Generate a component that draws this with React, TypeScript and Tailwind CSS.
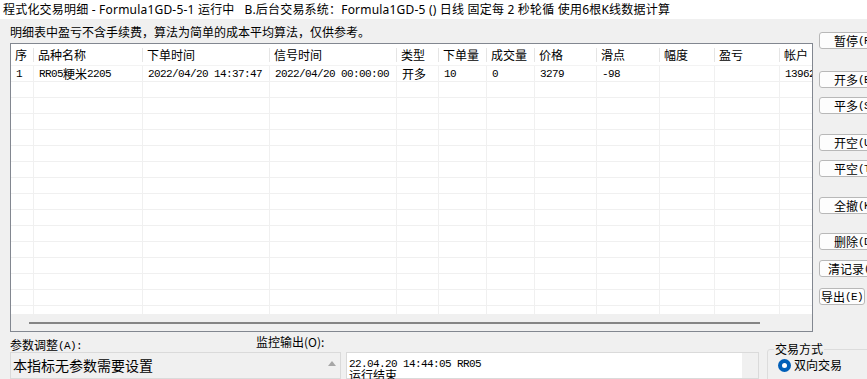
import React from "react";

// ASCII runs are drawn in a mono face so they keep the 6px SimSun pitch
function Mix({ text }: { text: string }) {
  const parts = text.split(/([\x20-\x7e]+)/).filter(Boolean);
  return (
    <span className="inline-flex items-center">
      {parts.map((p, i) =>
        /^[\x20-\x7e]+$/.test(p) ? (
          <span
            key={i}
            className="font-['Liberation_Mono',monospace] text-[11px] tracking-[-0.6px] whitespace-pre translate-y-px"
          >
            {p}
          </span>
        ) : (
          <span key={i}>{p}</span>
        )
      )}
    </span>
  );
}

const columns = [
  { title: "序", w: "w-[23px]" },
  { title: "品种名称", w: "w-[109px]" },
  { title: "下单时间", w: "w-[127px]" },
  { title: "信号时间", w: "w-[127px]" },
  { title: "类型", w: "w-[42px]" },
  { title: "下单量", w: "w-[48px]" },
  { title: "成交量", w: "w-[48px]" },
  { title: "价格", w: "w-[62px]" },
  { title: "滑点", w: "w-[63px]" },
  { title: "幅度", w: "w-[55px]" },
  { title: "盈亏", w: "w-[65px]" },
  { title: "帐户", w: "w-[100px]" },
];

const firstRow = [
  "1",
  "RR05粳米2205",
  "2022/04/20 14:37:47",
  "2022/04/20 00:00:00",
  "开多",
  "10",
  "0",
  "3279",
  "-98",
  "",
  "",
  "13962800",
];

const buttons = [
  { label: "暂停(P)", mt: "mt-0", w: "w-[72px]" },
  { label: "开多(B)", mt: "mt-[22px]", w: "w-[72px]" },
  { label: "平多(S)", mt: "mt-[9px]", w: "w-[72px]" },
  { label: "开空(U)", mt: "mt-[20px]", w: "w-[72px]" },
  { label: "平空(T)", mt: "mt-[9px]", w: "w-[72px]" },
  { label: "全撤(K)", mt: "mt-[20px]", w: "w-[72px]" },
  { label: "删除(D)", mt: "mt-[19px]", w: "w-[72px]" },
  { label: "清记录(C)", mt: "mt-[10px]", w: "w-[72px]" },
  { label: "导出(E)", mt: "mt-[11px]", w: "w-[46px]" },
];

export default function App() {
  const rows = Array.from({ length: 16 }, (_, i) => (i === 0 ? firstRow : null));

  return (
    <div className="w-[867px] h-[379px] overflow-hidden bg-[#f0f0f0] text-black text-[12px] leading-[16px] font-['Noto_Sans_CJK_SC',sans-serif]">
      {/* Title */}
      <div className="h-[19px] bg-white pl-[3px] flex items-center whitespace-pre tracking-[0.2px] font-['Noto_Sans','Noto_Sans_CJK_SC',sans-serif]">
        程式化交易明细 - Formula1GD-5-1 运行中   B.后台交易系统：Formula1GD-5 () 日线 固定每 2 秒轮循 使用6根K线数据计算
      </div>

      {/* Main */}
      <div className="flex h-[313px]">
        <div className="w-[813px] shrink-0 flex flex-col">
          <div className="h-[24px] pl-[10px] pt-[5px] whitespace-nowrap">
            明细表中盈亏不含手续费，算法为简单的成本平均算法，仅供参考。
          </div>
          <div className="ml-[10px] w-[803px] h-[289px] border border-[#828790] bg-white flex flex-col overflow-hidden">
            {/* Header */}
            <div className="h-[22px] shrink-0 flex border-b border-[#f3f3f3]">
              {columns.map((c) => (
                <div key={c.title} className={`${c.w} shrink-0 flex items-center`}>
                  <span className="pl-[4px] whitespace-nowrap">{c.title}</span>
                  <div className="ml-auto w-px h-[14px] bg-[#e5e5e5]" />
                </div>
              ))}
            </div>
            {/* Body */}
            <div className="flex-1 min-h-0 overflow-hidden">
              {rows.map((r, i) => (
                <div key={i} className="h-[16px] flex border-b border-[#f0f0f0]">
                  {columns.map((c, j) => (
                    <div
                      key={c.title}
                      className={`${c.w} shrink-0 border-r border-[#f0f0f0] pl-[5px] flex items-center whitespace-nowrap overflow-hidden leading-[15px]`}
                    >
                      {r ? <Mix text={r[j]} /> : null}
                    </div>
                  ))}
                </div>
              ))}
            </div>
            {/* Horizontal scrollbar */}
            <div className="h-[17px] shrink-0 bg-[#f0f0f0] pl-[18px] pt-[8px]">
              <div className="w-[731px] h-[2px] bg-[#858585]" />
            </div>
          </div>
        </div>

        {/* Buttons */}
        <div className="flex flex-col pt-[13px] pl-[6px]">
          {buttons.map((b) => (
            <div
              key={b.label}
              className={`${b.mt} ${b.w} h-[17px] shrink-0 border border-[#b8b8b8] rounded-[3px] bg-[#fdfdfd] flex items-center justify-center whitespace-nowrap leading-[15px]`}
            >
              <Mix text={b.label} />
            </div>
          ))}
        </div>
      </div>

      {/* Bottom */}
      <div className="flex h-[47px]">
        <div className="w-[759px] shrink-0 flex flex-col">
          <div className="h-[20px] shrink-0 flex items-start">
            <div className="w-[256px] pl-[10px] pt-[5px] whitespace-nowrap">
              <Mix text="参数调整(A):" />
            </div>
            <div className="pt-[2px] whitespace-nowrap">监控输出(O):</div>
          </div>
          <div className="flex flex-1 min-h-0">
            <div className="ml-[10px] w-[331px] border border-[#dadada] bg-[#f0f0f0] flex">
              <div className="flex-1 pl-[2px] pt-[3px] text-[14px] leading-[18px] whitespace-nowrap">
                本指标无参数需要设置
              </div>
              <div className="w-[17px] flex justify-center pt-[8px]">
                <svg width="8" height="5" viewBox="0 0 8 5">
                  <polygon points="0,5 4,0 8,5" fill="#a6a6a6" />
                </svg>
              </div>
            </div>
            <div className="ml-[5px] w-[413px] border border-[#dadada] bg-white flex">
              <div className="flex-1 pl-[2px] pt-[2px] whitespace-nowrap">
                <div className="leading-[11px]">
                  <Mix text="22.04.20 14:44:05 RR05" />
                </div>
                <div className="leading-[12px]">运行结束</div>
              </div>
              <div className="w-[16px] bg-[#f0f0f0]" />
            </div>
          </div>
        </div>

        {/* Trade mode group */}
        <fieldset className="ml-[8px] mt-[9px] w-[120px] h-[60px] shrink-0 border border-[#dcdcdc] rounded-[3px] pl-[6px]">
          <legend className="px-[1px] whitespace-nowrap">交易方式</legend>
          <div className="flex items-center gap-[3px] ml-[4px]">
            <div className="w-[13px] h-[13px] rounded-full bg-[#005fb8] flex items-center justify-center">
              <div className="w-[5px] h-[5px] rounded-full bg-white" />
            </div>
            <span className="whitespace-nowrap">双向交易</span>
          </div>
        </fieldset>
      </div>
    </div>
  );
}
